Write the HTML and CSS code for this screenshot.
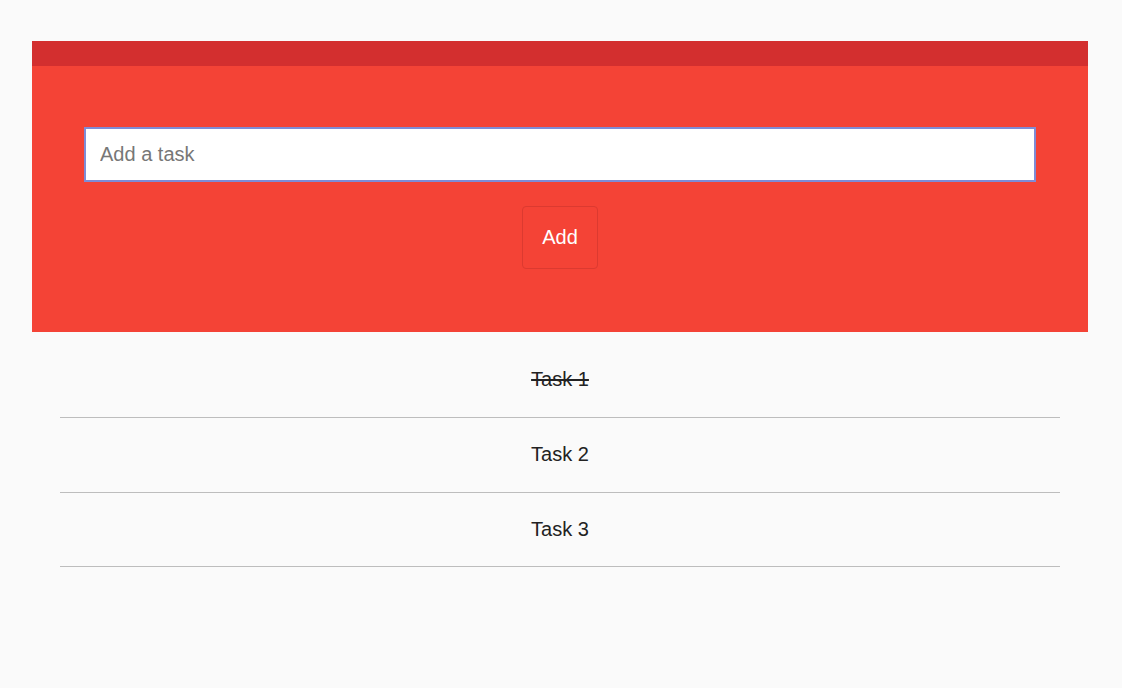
FILE: index.html
```html
<!DOCTYPE html>
<html lang="en">
<head>
<meta charset="utf-8">
<title>Todo</title>
<link rel="stylesheet" href="styles.css">
</head>
<body>
<div class="app">
  <div class="header">
    <div class="topbar"></div>
    <div class="form">
      <input class="task-input" type="text" placeholder="Add a task" autofocus>
      <button class="add-btn" type="button">Add</button>
    </div>
  </div>
  <ul class="list">
    <li class="item done">Task 1</li>
    <li class="item">Task 2</li>
    <li class="item">Task 3</li>
  </ul>
</div>
</body>
</html>
```

FILE: styles.css
```css
html, body {
  margin: 0;
  padding: 0;
  background: #fafafa;
  font-family: "Liberation Sans", Arial, sans-serif;
}
.app {
  padding: 41px 34px 0 32px;
}
.header {
  background: #f44336;
  width: 1056px;
}
.topbar {
  height: 25px;
  background: #d32f2f;
}
.form {
  display: flex;
  flex-direction: column;
  align-items: center;
  padding: 61px 52px 63px 52px;
  gap: 24px;
}
.task-input {
  box-sizing: border-box;
  width: 952px;
  height: 55px;
  border: 2px solid #7f8cd6;
  background: #fff;
  padding: 0 14px;
  font-family: "Liberation Sans", Arial, sans-serif;
  font-size: 20px;
  color: #222;
  outline: none;
  margin: 0;
}
.task-input::placeholder {
  color: #777;
}
.add-btn {
  box-sizing: border-box;
  width: 76px;
  height: 63px;
  background: #f44336;
  border: 1px solid #dc3a30;
  border-radius: 4px;
  color: #fff;
  font-family: "Liberation Sans", Arial, sans-serif;
  font-size: 20px;
  padding: 0;
  margin: 0;
}
.list {
  list-style: none;
  margin: 11px 0 0 28px;
  padding: 0;
  width: 1000px;
}
.item {
  text-align: center;
  font-size: 20px;
  line-height: 23px;
  padding: 25px 0 26px;
  color: #222;
  border-bottom: 1px solid #bdbdbd;
}
.item:last-child {
  padding-bottom: 25px;
}
.item.done {
  text-decoration: line-through;
}
```
